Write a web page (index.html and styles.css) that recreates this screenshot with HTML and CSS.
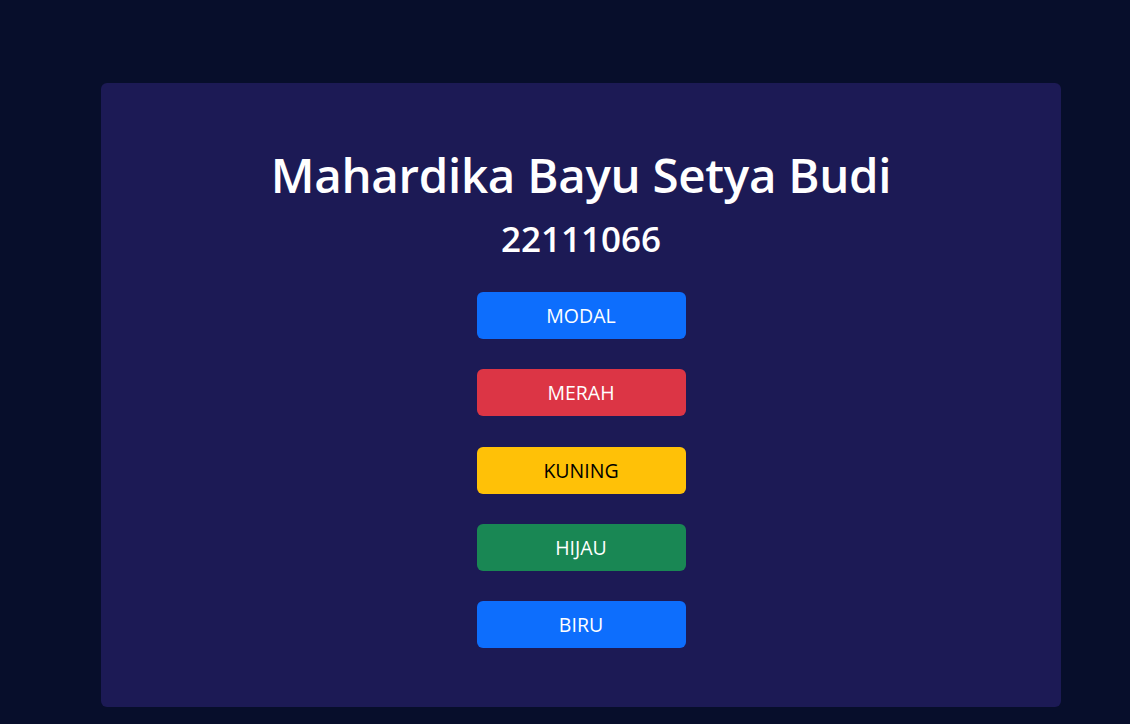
FILE: index.html
```html
<!DOCTYPE html>
<html lang="id">
<head>
<meta charset="utf-8">
<title>Mahardika Bayu Setya Budi</title>
<link rel="stylesheet" href="styles.css">
</head>
<body>
<main class="page">
  <section class="card">
    <h1 class="title">Mahardika Bayu Setya Budi</h1>
    <h2 class="nim">22111066</h2>
    <div class="buttons">
      <button class="btn btn-blue">MODAL</button>
      <button class="btn btn-red">MERAH</button>
      <button class="btn btn-yellow">KUNING</button>
      <button class="btn btn-green">HIJAU</button>
      <button class="btn btn-blue">BIRU</button>
    </div>
  </section>
</main>
</body>
</html>
```

FILE: styles.css
```css
html, body {
  margin: 0;
  padding: 0;
}
body {
  background: #070e2b;
  font-family: "Open Sans", "Noto Sans", sans-serif;
  color: #fff;
  height: 724px;
  overflow: hidden;
}
.page {
  padding: 83px 69px 0 101px;
}
.card {
  width: 960px;
  height: 624px;
  box-sizing: border-box;
  background: #1c1a55;
  border-radius: 6px;
  display: flex;
  flex-direction: column;
  align-items: center;
  padding-top: 63px;
}
.title {
  margin: 0;
  font-size: 47.5px;
  font-weight: 600;
  line-height: 57px;
  letter-spacing: -0.3px;
}
.nim {
  margin: 15px 0 0;
  font-size: 35px;
  font-weight: 600;
  line-height: 42px;
}
.buttons {
  margin-top: 32px;
  display: flex;
  flex-direction: column;
  gap: 30.25px;
}
.btn {
  width: 209px;
  height: 47px;
  border: none;
  border-radius: 6px;
  font-family: "Open Sans", "Noto Sans", sans-serif;
  font-size: 19.5px;
  color: #fff;
  padding: 0;
}
.btn-blue { background: #0d6efd; }
.btn-red { background: #dc3545; }
.btn-yellow { background: #ffc107; color: #000; }
.btn-green { background: #198754; }
```
